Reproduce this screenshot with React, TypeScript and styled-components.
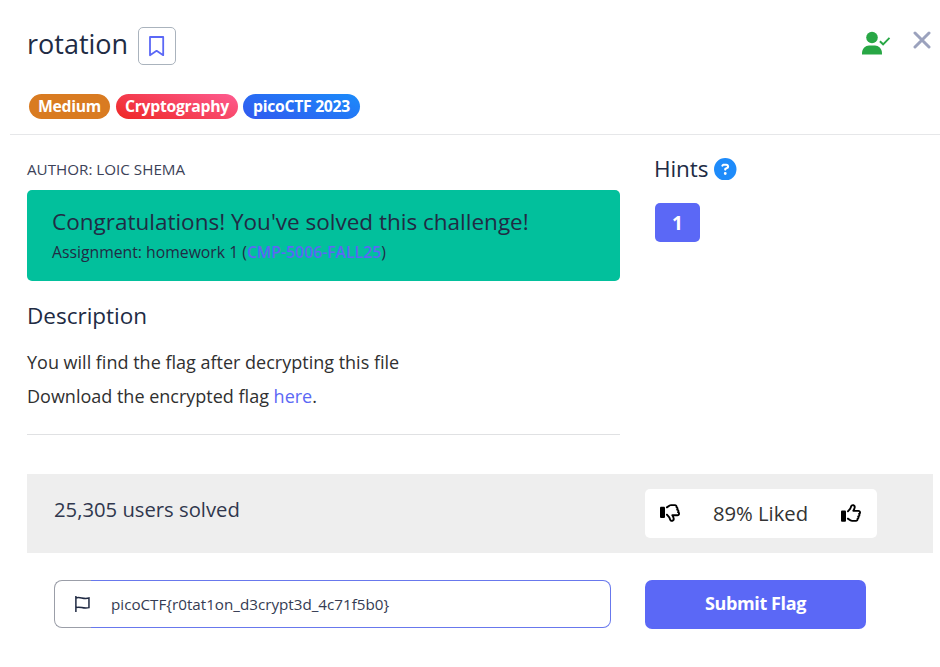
import React from 'react';
import styled, { createGlobalStyle } from 'styled-components';
import { FaCircleQuestion, FaRegThumbsDown, FaRegThumbsUp } from 'react-icons/fa6';

const GlobalStyle = createGlobalStyle`
  * { box-sizing: border-box; }
  body { margin: 0; background: #fff; color: #212b44; font-family: 'Open Sans', 'Noto Sans', sans-serif; }
  h1, h2, h3, p { margin: 0; font-weight: 400; }
  button { font-family: inherit; border: 0; padding: 0; background: none; cursor: pointer; }
`;

const Dialog = styled.main`
  width: 940px;
  height: 667px;
  overflow: hidden;
`;

const Header = styled.header`
  height: 135px;
  margin-left: 10px;
  padding: 27px 9px 0 17px;
  border-bottom: 1px solid #e6e7e9;
`;

const TitleRow = styled.div`
  display: flex;
  align-items: flex-start;
  height: 67px;
`;

const Title = styled.h1`
  width: 111px;
  font-size: 27px;
  line-height: 34px;
  white-space: nowrap;
`;

const BookmarkButton = styled.button`
  display: grid;
  place-items: center;
  width: 38px;
  height: 38px;
  border: 1px solid #aab3bd;
  border-radius: 5px;
`;

const HeaderIcons = styled.div`
  display: flex;
  align-items: flex-start;
  gap: 22px;
  margin-left: auto;
  padding-top: 4px;
`;

const CloseButton = styled.button`
  display: flex;
`;

const TagList = styled.div`
  display: flex;
  padding-left: 2px;
`;

const Tag = styled.span<{ $fill: string; $width: number; $gap?: number }>`
  width: ${(p) => p.$width}px;
  height: 25px;
  margin-right: ${(p) => p.$gap ?? 0}px;
  border-radius: 13px;
  background: ${(p) => p.$fill};
  color: #fff;
  font-size: 15.75px;
  font-weight: 700;
  letter-spacing: -0.3px;
  line-height: 24px;
  text-align: center;
  white-space: nowrap;
`;

const Content = styled.div`
  display: grid;
  grid-template-columns: 593px 1fr;
  column-gap: 34px;
  height: 339px;
  padding: 0 7px 0 27px;
`;

const Author = styled.p`
  padding-top: 24px;
  height: 55px;
  font-size: 15.2px;
  line-height: 21px;
  color: #3c4258;
`;

const SolvedBanner = styled.section`
  height: 91px;
  padding: 17px 25px;
  border-radius: 5px;
  background: #02c09c;
`;

const BannerTitle = styled.h2`
  font-size: 22.5px;
  line-height: 29px;
`;

const Assignment = styled.p`
  padding-top: 1px;
  font-size: 15.75px;
  line-height: 30px;
`;

const Link = styled.a<{ $bold?: boolean }>`
  color: #5b68f5;
  font-weight: ${(p) => (p.$bold ? 600 : 400)};
  text-decoration: none;
`;

const SectionTitle = styled.h2`
  margin-top: 20px;
  font-size: 22.5px;
  line-height: 30px;
`;

const Description = styled.div`
  height: 104px;
  padding-top: 14px;
  border-bottom: 1px solid #e0e1e3;
  color: #303030;
  font-size: 18px;
  line-height: 34px;
`;

const HintsTitle = styled.h2`
  display: flex;
  align-items: center;
  gap: 6px;
  margin-top: 19px;
  font-size: 22.5px;
  letter-spacing: -0.1px;
  line-height: 29px;

  svg {
    margin-top: 1px;
  }
`;

const HintButton = styled.button`
  display: block;
  width: 45px;
  height: 39px;
  margin: 20px 0 0 1px;
  border-radius: 5px;
  background: #5b68f6;
  color: #fff;
  font-size: 19px;
  font-weight: 700;
`;

const Stats = styled.section`
  display: flex;
  justify-content: space-between;
  height: 79px;
  margin: 0 7px 0 27px;
  padding: 15px 56px 0 27px;
  background: #eee;
`;

const SolvedCount = styled.p`
  padding-top: 5px;
  font-size: 20.25px;
  line-height: 30px;
  color: #30374d;
`;

const Rating = styled.div`
  display: flex;
  align-items: center;
  justify-content: space-between;
  width: 232px;
  height: 49px;
  padding: 0 16px 2px 15px;
  border-radius: 5px;
  background: #fff;
  color: #333;
  font-size: 20.25px;
`;

const VoteButton = styled.button`
  display: flex;
  color: #000;
`;

const FlagForm = styled.form`
  display: flex;
  gap: 34px;
  padding: 27px 0 0 54px;
`;

const FlagField = styled.label`
  display: flex;
  width: 557px;
  height: 48px;
`;

const FlagIconBox = styled.span`
  display: flex;
  align-items: center;
  width: 37px;
  padding: 0 0 0 20px;
  border: 1px solid #9b9ea8;
  border-right: 0;
  border-radius: 8px 0 0 8px;
`;

const FlagInput = styled.input`
  width: 520px;
  padding: 0 20px;
  border: 1px solid #6878ed;
  border-left: 0;
  border-radius: 0 8px 8px 0;
  outline: 0;
  color: #353b53;
  font-family: inherit;
  font-size: 15.2px;
`;

const SubmitButton = styled.button`
  width: 221px;
  height: 49px;
  padding-bottom: 3px;
  border-radius: 7px;
  background: #5b68f6;
  color: #fff;
  font-size: 18px;
  font-weight: 700;
  letter-spacing: -0.4px;
`;

const BookmarkIcon = () => (
  <svg width="16" height="21" viewBox="0 0 16 21" fill="none" stroke="#5b68f6" strokeWidth="1.8">
    <path d="M1 1h13.200v18.200L7.600 14.800 1 19.200z" strokeLinejoin="round" />
  </svg>
);

const UserCheckIcon = () => (
  <svg width="29" height="24" viewBox="0 0 29 24">
    <circle cx="10" cy="6.500" r="5.800" fill="#28a745" />
    <path d="M0 23.500v-1.300c0-4.700 3.700-7.600 7-7.600h6c3.300 0 7 2.900 7 7.600v1.300z" fill="#28a745" />
    <path d="m17.900 10.200 3.200 3.100 6.400-6.400" fill="none" stroke="#28a745" strokeWidth="1.900" />
  </svg>
);

const CloseIcon = () => (
  <svg width="18" height="18" viewBox="0 0 18 18" stroke="#9ba2bd" strokeWidth="3" strokeLinecap="round">
    <path d="m2 2 14 14M16 2 2 16" />
  </svg>
);

const FlagIcon = () => (
  <svg width="18" height="19" viewBox="0 0 18 19" fill="none" stroke="#202a43" strokeWidth="1.700">
    <path d="M1 0v18M1 2.200c4.500-2 8.500 2 14.700 0v10.800c-6.200 2-10.200-2-14.700 0" />
  </svg>
);

export default function App() {
  return (
    <>
      <GlobalStyle />
      <Dialog>
        <Header>
          <TitleRow>
            <Title>rotation</Title>
            <BookmarkButton aria-label="Bookmark"><BookmarkIcon /></BookmarkButton>
            <HeaderIcons>
              <UserCheckIcon />
              <CloseButton aria-label="Close"><CloseIcon /></CloseButton>
            </HeaderIcons>
          </TitleRow>
          <TagList>
            <Tag $fill="#d97b21" $width={81} $gap={6}>Medium</Tag>
            <Tag $fill="linear-gradient(20deg, #ee2724, #fe5c91)" $width={122} $gap={5}>Cryptography</Tag>
            <Tag $fill="linear-gradient(20deg, #3158ef, #1b8bfa)" $width={117}>picoCTF 2023</Tag>
          </TagList>
        </Header>
        <Content>
          <div>
            <Author>AUTHOR: LOIC SHEMA</Author>
            <SolvedBanner>
              <BannerTitle>Congratulations! You've solved this challenge!</BannerTitle>
              <Assignment>Assignment: homework 1 (<Link $bold>CMP-5006-FALL25</Link>)</Assignment>
            </SolvedBanner>
            <SectionTitle>Description</SectionTitle>
            <Description>
              <p>You will find the flag after decrypting this file</p>
              <p>Download the encrypted flag <Link>here</Link>.</p>
            </Description>
          </div>
          <aside>
            <HintsTitle>Hints <FaCircleQuestion size={22.500} color="#1e8bfa" /></HintsTitle>
            <HintButton>1</HintButton>
          </aside>
        </Content>
        <Stats>
          <SolvedCount>25,305 users solved</SolvedCount>
          <Rating>
            <VoteButton aria-label="Dislike"><FaRegThumbsDown size={20} /></VoteButton>
            <span>89% Liked</span>
            <VoteButton aria-label="Like"><FaRegThumbsUp size={20} /></VoteButton>
          </Rating>
        </Stats>
        <FlagForm onSubmit={(e) => e.preventDefault()}>
          <FlagField>
            <FlagIconBox><FlagIcon /></FlagIconBox>
            <FlagInput defaultValue="picoCTF{r0tat1on_d3crypt3d_4c71f5b0}" />
          </FlagField>
          <SubmitButton type="submit">Submit Flag</SubmitButton>
        </FlagForm>
      </Dialog>
    </>
  );
}
